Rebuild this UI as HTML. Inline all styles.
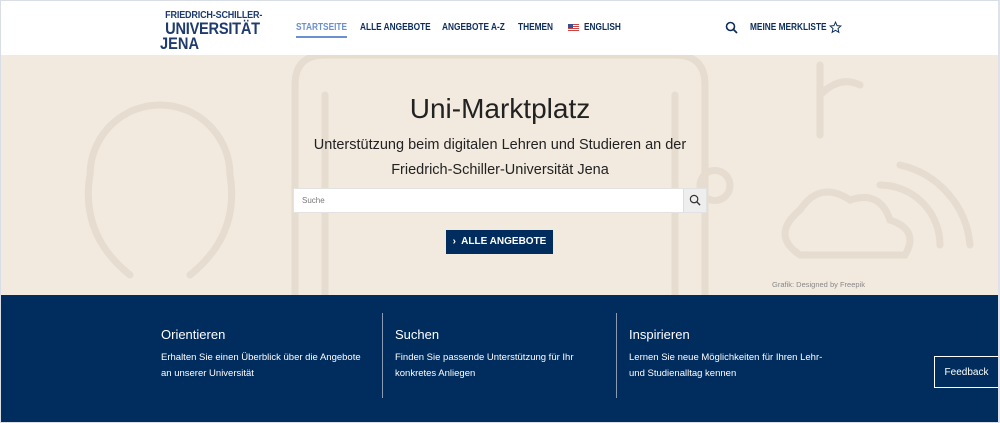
<!DOCTYPE html>
<html><head><meta charset="utf-8"><style>
*{margin:0;padding:0;box-sizing:border-box}
body{width:1000px;height:423px;overflow:hidden;font-family:"Liberation Sans",sans-serif;background:#fff;position:relative}
.frame{position:absolute;inset:0;border:1px solid #d9dde6;border-right:2px solid #dfe2ea;pointer-events:none;z-index:9}
.hdr{position:absolute;left:0;top:0;width:1000px;height:55px;background:#fff}
.logo{position:absolute;left:160px;top:10px;color:#1f3b6e;line-height:1;transform:scaleX(0.86);transform-origin:left top}
.logo .a{font-size:10.5px;font-weight:bold;margin-left:6px;letter-spacing:-0.2px}
.logo .b{font-size:17px;font-weight:bold;margin-left:6px;letter-spacing:-0.3px;line-height:15px}
.logo .c{font-size:17px;font-weight:bold;line-height:15px}
.nav{position:absolute;top:22px;font-size:10px;font-weight:bold;color:#0c2d5c;transform:scaleX(0.83);transform-origin:left top;white-space:nowrap}
.hero{position:absolute;left:0;top:55px;width:1000px;height:240px;background:#f2eadf;overflow:hidden}
h1{position:absolute;top:93px;width:1000px;text-align:center;font-size:28px;font-weight:normal;color:#222}
.sub{position:absolute;top:133px;width:1000px;text-align:center;font-size:14.5px;line-height:25px;color:#222}
.search{position:absolute;left:293px;top:188px;width:414px;height:25px;background:#fff;border:1px solid #e2e2e2}
.search span{position:absolute;left:8px;top:7px;font-size:8px;color:#777}
.sbtn{position:absolute;right:0;top:0;width:23px;height:23px;background:#eeeeee;border-left:1px solid #ddd}
.btn{position:absolute;left:446px;top:230px;width:107px;height:24px;background:#002d5d;color:#fff;font-size:10px;font-weight:bold;line-height:24px;text-align:center}
.credit{position:absolute;left:772px;top:280px;font-size:7.5px;color:#888}
.foot{position:absolute;left:0;top:295px;width:1000px;height:128px;background:#002d5d;color:#fff}
.col{position:absolute;top:32px}
.col h3{font-size:13px;font-weight:normal;margin-bottom:8px}
.col p{font-size:9.5px;line-height:16px}
.sep{position:absolute;top:18px;width:1px;height:85px;background:#8a9ab3}
.fb{position:absolute;left:934px;top:356px;width:65px;height:32px;border:1px solid #fff;background:#002d5d;color:#fff;font-size:10px;line-height:32px;text-align:center}
</style></head><body>
<div class="hdr">
 <div class="logo"><div class="a">FRIEDRICH-SCHILLER-</div><div class="b">UNIVERSITÄT</div><div class="c">JENA</div></div>
 <div class="nav" style="left:296px;color:#6b8fcf">STARTSEITE</div>
 <div style="position:absolute;left:296px;top:36px;width:51px;height:2px;background:#6b8fcf"></div>
 <div class="nav" style="left:360px">ALLE ANGEBOTE</div>
 <div class="nav" style="left:442px">ANGEBOTE A-Z</div>
 <div class="nav" style="left:518px">THEMEN</div>
 <div style="position:absolute;left:568px;top:24px;width:11px;height:7px;background:repeating-linear-gradient(#c44 0 1px,#fff 1px 2px)"><div style="width:5px;height:4px;background:#3a4f8f"></div></div>
 <div class="nav" style="left:584px">ENGLISH</div>
 <svg style="position:absolute;left:725px;top:21px" width="13" height="13" viewBox="0 0 13 13"><circle cx="5.5" cy="5.5" r="4" fill="none" stroke="#0c2d5c" stroke-width="1.6"/><path d="M8.5 8.5L12 12" stroke="#0c2d5c" stroke-width="1.8"/></svg>
 <div class="nav" style="left:750px">MEINE MERKLISTE</div>
 <svg style="position:absolute;left:829px;top:21px" width="13" height="13" viewBox="0 0 24 24"><path d="M12 2l2.9 6.6 7.1.6-5.4 4.7 1.6 7-6.2-3.7-6.2 3.7 1.6-7L2 9.2l7.1-.6z" fill="none" stroke="#0c2d5c" stroke-width="1.8"/></svg>
</div>
<div class="hero">
 <svg width="1000" height="240" style="position:absolute;left:0;top:0" fill="none" stroke="#e6dccf" stroke-width="7" stroke-linecap="round">
  <path d="M295 240V30q0-30 30-30h350q30 0 30 30v210"/>
  <path d="M325 240V40M675 240V40"/>
  <path d="M130 220q-50-40-40-100a70 70 0 0 1 140 0q10 60-40 100"/>
  <path d="M800 200q-30-20 0-45q20-30 50-10q30-10 40 20q30 10 15 35z"/>
  <path d="M880 130a60 60 0 0 1 60 60M900 110a90 90 0 0 1 70 80"/>
  <path d="M820 80V10M820 40q20-20 40-10"/>
  <path d="M700 130a15 15 0 1 1 0 1"/>
 </svg>
</div>
<h1>Uni-Marktplatz</h1>
<div class="sub">Unterstützung beim digitalen Lehren und Studieren an der<br>Friedrich-Schiller-Universität Jena</div>
<div class="search"><span>Suche</span><div class="sbtn"><svg style="position:absolute;left:5px;top:5px" width="12" height="12" viewBox="0 0 13 13"><circle cx="5.5" cy="5.5" r="4" fill="none" stroke="#333" stroke-width="1.3"/><path d="M8.5 8.5L12 12" stroke="#333" stroke-width="1.5"/></svg></div></div>
<div class="btn">›&nbsp; ALLE ANGEBOTE</div>
<div class="credit">Grafik: Designed by Freepik</div>
<div class="foot">
 <div class="col" style="left:161px"><h3>Orientieren</h3><p>Erhalten Sie einen Überblick über die Angebote<br>an unserer Universität</p></div>
 <div class="sep" style="left:382px"></div>
 <div class="col" style="left:395px"><h3>Suchen</h3><p>Finden Sie passende Unterstützung für Ihr<br>konkretes Anliegen</p></div>
 <div class="sep" style="left:616px"></div>
 <div class="col" style="left:629px"><h3>Inspirieren</h3><p>Lernen Sie neue Möglichkeiten für Ihren Lehr-<br>und Studienalltag kennen</p></div>
</div>
<div class="fb">Feedback</div>
<div class="frame"></div>
</body></html>
